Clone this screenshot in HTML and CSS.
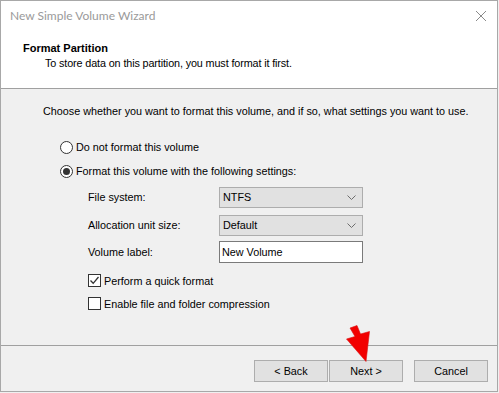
FILE: index.html
```html
<!DOCTYPE html>
<html lang="en">
<head>
    <meta charset="UTF-8">
    <title>New Simple Volume Wizard</title>
    <link rel="stylesheet" href="styles.css">
</head>
<body>

<div class="window">
    <div class="titlebar">
        <span class="title">New Simple Volume Wizard</span>
        <svg class="close" width="12" height="12" viewBox="0 0 12 12">
            <path d="M1 1 L11 11 M11 1 L1 11" stroke="#8a8a8a" stroke-width="1" fill="none"/>
        </svg>
    </div>

    <header class="wizard-head">
        <h1>Format Partition</h1>
        <p>To store data on this partition, you must format it first.</p>
    </header>

    <main class="wizard-body">
        <p class="intro">Choose whether you want to format this volume, and if so, what settings you want to use.</p>

        <div class="options">
            <div class="opt-row">
                <span class="radio"></span>
                <span>Do not format this volume</span>
            </div>
            <div class="opt-row">
                <span class="radio checked"></span>
                <span>Format this volume with the following settings:</span>
            </div>
        </div>

        <div class="settings">
            <div class="field">
                <label>File system:</label>
                <div class="combo">
                    <span>NTFS</span>
                    <svg width="9" height="5" viewBox="0 0 9 5"><path d="M0.5 0.5 L4.5 4.5 L8.5 0.5" stroke="#6d6d6d" fill="none"/></svg>
                </div>
            </div>
            <div class="field">
                <label>Allocation unit size:</label>
                <div class="combo">
                    <span>Default</span>
                    <svg width="9" height="5" viewBox="0 0 9 5"><path d="M0.5 0.5 L4.5 4.5 L8.5 0.5" stroke="#6d6d6d" fill="none"/></svg>
                </div>
            </div>
            <div class="field">
                <label>Volume label:</label>
                <div class="textbox">New Volume</div>
            </div>
        </div>

        <div class="checks">
            <div class="check-row">
                <span class="checkbox">
                    <svg width="11" height="11" viewBox="0 0 11 11"><path d="M1.5 5.5 L4.2 8.3 L9.5 2" stroke="#333" stroke-width="1.3" fill="none"/></svg>
                </span>
                <span>Perform a quick format</span>
            </div>
            <div class="check-row">
                <span class="checkbox"></span>
                <span>Enable file and folder compression</span>
            </div>
        </div>
    </main>

    <footer class="wizard-foot">
        <button class="btn">&lt; Back</button>
        <button class="btn">Next &gt;</button>
        <button class="btn cancel">Cancel</button>
    </footer>

    <!-- red pointer arrow over the Next button -->
    <svg class="pointer" width="499" height="393" viewBox="0 0 499 393">
        <polygon points="350,328 357,325.5 360.5,334 369.5,331.5 366,361.5 346.5,339 355,336.5" fill="#f20000" stroke="#d81010" stroke-width="0.6"/>
    </svg>
</div>

</body>
</html>
```

FILE: styles.css
```css
body {
    margin: 0;
    background: #f0f0f0;
    font-family: 'Liberation Sans', Arial, sans-serif;
    font-size: 10.8px;
    color: #000;
}

.window {
    position: relative;
    width: 498px;
    height: 392px;
    box-sizing: border-box;
    border: 1px solid #a8a8a8;
    background: #f0f0f0;
    display: flex;
    flex-direction: column;
}

.titlebar {
    height: 29px;
    flex: none;
    background: #fff;
    display: flex;
    align-items: center;
    justify-content: space-between;
    padding: 0 9px 0 9px;
}

.title {
    font-family: Lato, 'Noto Sans', sans-serif;
    font-size: 12px;
    color: #9a9a9a;
}

.close {
    margin-right: 1px;
}

.wizard-head {
    height: 59px;
    flex: none;
    box-sizing: border-box;
    background: #fff;
    border-bottom: 1px solid #a0a0a0;
    padding: 11px 0 0 22px;
}

.wizard-head h1 {
    font-size: 11px;
    font-weight: bold;
    line-height: 14px;
    margin: 0;
}

.wizard-head p {
    margin: 1px 0 0 22px;
    line-height: 14px;
    letter-spacing: -0.12px;
}

.wizard-body {
    height: 256px;
    flex: none;
    box-sizing: border-box;
    padding: 15px 0 0 42px;
}

.intro {
    margin: 0;
    line-height: 14px;
}

.options {
    margin: 17px 0 0 17px;
}

.opt-row, .check-row {
    display: flex;
    align-items: center;
    gap: 3px;
    height: 24px;
}

.radio {
    width: 13px;
    height: 13px;
    box-sizing: border-box;
    border: 1px solid #333;
    border-radius: 50%;
    background: #fff;
    display: flex;
    align-items: center;
    justify-content: center;
}

.radio.checked::after {
    content: "";
    width: 7px;
    height: 7px;
    border-radius: 50%;
    background: #333;
}

.settings {
    margin: 3px 0 0 45px;
    display: flex;
    flex-direction: column;
    gap: 6px;
}

.field {
    display: flex;
    align-items: center;
    height: 22px;
}

.field:last-child {
    margin-top: -1px;
}

.field label {
    width: 131px;
}

.combo {
    width: 144px;
    height: 21px;
    box-sizing: border-box;
    border: 1px solid #adadad;
    background: #e1e1e1;
    display: flex;
    align-items: center;
    justify-content: space-between;
    padding: 0 6px 0 3px;
}

.textbox {
    width: 144px;
    height: 22px;
    box-sizing: border-box;
    border: 1px solid #7a7a7a;
    background: #fff;
    display: flex;
    align-items: center;
    padding-left: 2px;
}

.checks {
    margin: 6px 0 0 45px;
}

.check-row {
    height: 23px;
}

.checkbox {
    width: 13px;
    height: 13px;
    box-sizing: border-box;
    border: 1px solid #333;
    background: #fff;
    display: flex;
    align-items: center;
    justify-content: center;
}

.wizard-foot {
    flex: 1;
    border-top: 1px solid #a0a0a0;
    display: flex;
    justify-content: flex-end;
    align-items: flex-start;
    padding: 14px 9px 0 0;
    gap: 1px;
}

.btn {
    width: 74px;
    height: 22px;
    border: 1px solid #adadad;
    background: #e1e1e1;
    font-family: 'Liberation Sans', Arial, sans-serif;
    font-size: 10.8px;
    color: #000;
    padding: 0;
}

.btn.cancel {
    margin-left: 10px;
}

.pointer {
    position: absolute;
    left: -1px;
    top: -1px;
    pointer-events: none;
}
```
